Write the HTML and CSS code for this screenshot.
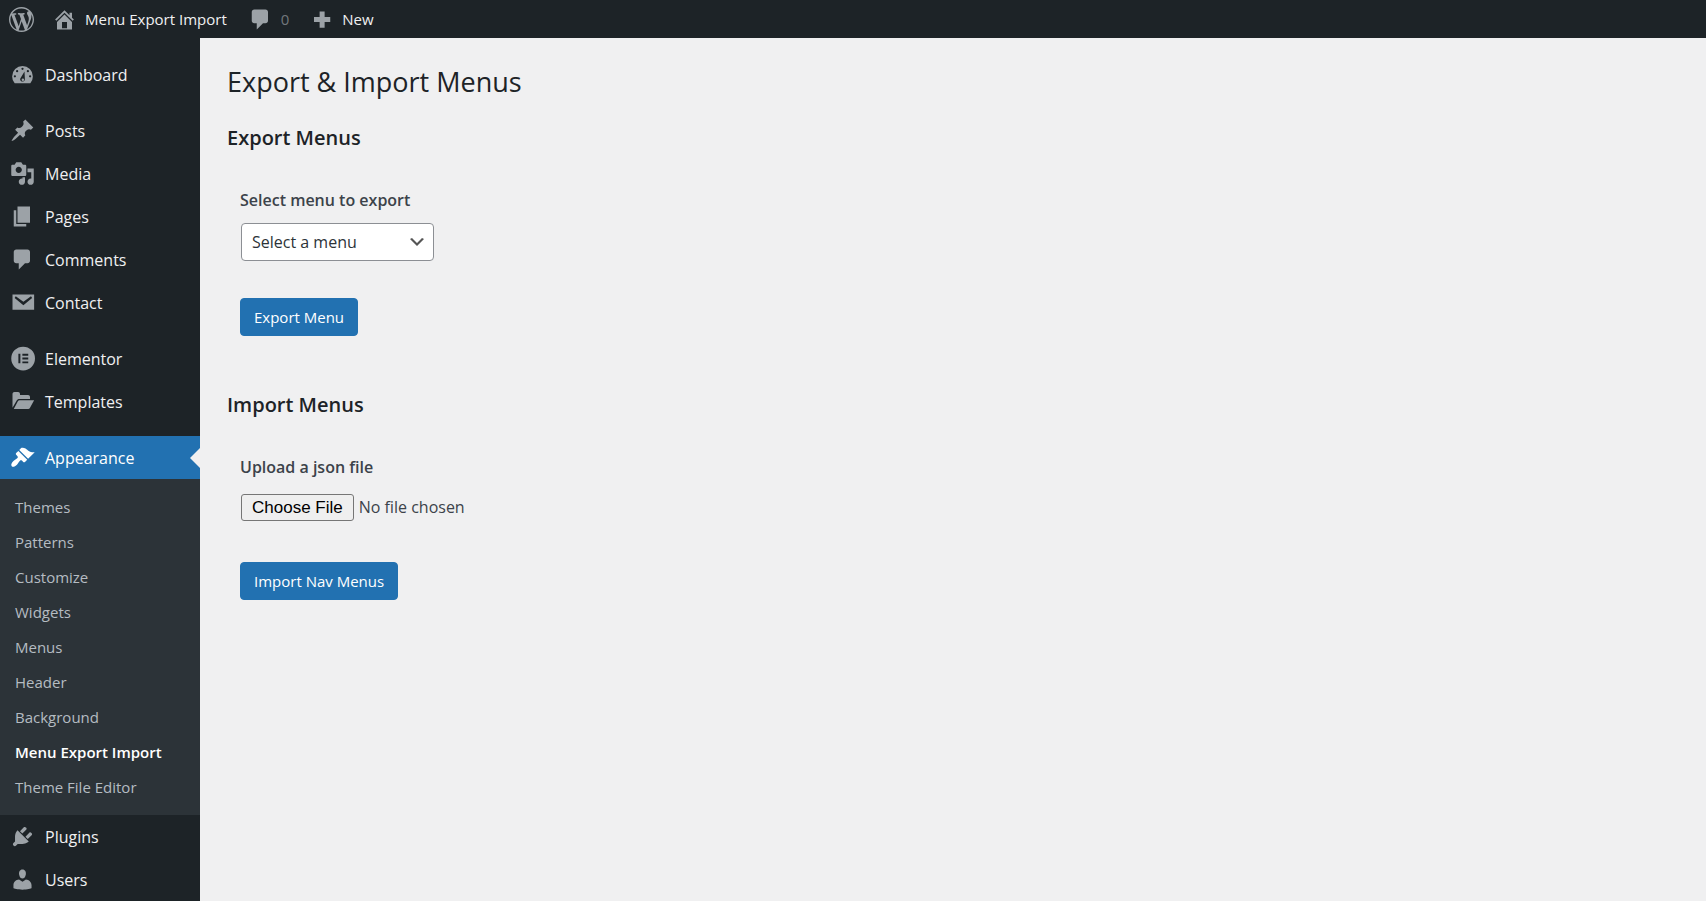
FILE: index.html
```html
<!DOCTYPE html>
<html lang="en">
<head>
  <meta charset="UTF-8" />
  <title>Export &amp; Import Menus</title>
  <meta name="viewport" content="width=device-width, initial-scale=1.0" />
  <link rel="stylesheet" href="styles.css">
</head>
<body>
  <header class="adminbar">
    <a href="#" class="bar-item bar-logo" aria-label="About WordPress">
      <svg class="icon" viewBox="0 0 20 20"><path d="M20 10c0-5.51-4.49-10-10-10C4.48 0 0 4.49 0 10c0 5.52 4.48 10 10 10 5.51 0 10-4.48 10-10zM7.78 15.37L4.37 6.22c.55-.02 1.17-.08 1.17-.08.5-.06.44-1.13-.06-1.11 0 0-1.45.11-2.37.11-.18 0-.37 0-.58-.01C4.12 2.69 6.87 1.11 10 1.11c2.33 0 4.45.87 6.05 2.34-.68-.11-1.65.39-1.65 1.58 0 .74.45 1.36.9 2.1.35.61.55 1.36.55 2.46 0 1.49-1.4 5-1.4 5l-3.03-8.37c.54-.02.82-.17.82-.17.5-.05.44-1.25-.06-1.22 0 0-1.44.12-2.38.12-.87 0-2.33-.12-2.33-.12-.5-.03-.56 1.2-.06 1.22l.92.08 1.26 3.41zM17.41 10c.24-.64.74-1.87.43-4.25.7 1.29 1.05 2.71 1.05 4.25 0 3.29-1.73 6.24-4.4 7.78.97-2.59 1.94-5.2 2.92-7.78zM6.1 18.09C3.12 16.65 1.11 13.53 1.11 10c0-1.3.23-2.48.72-3.59C3.25 10.3 4.67 14.2 6.1 18.09zm4.03-6.63l2.58 6.98c-.86.29-1.76.45-2.71.45-.79 0-1.57-.11-2.29-.33.81-2.38 1.62-4.74 2.42-7.1z"/></svg>
    </a>
    <a href="#" class="bar-item bar-site">
      <svg class="icon" viewBox="0 0 20 20"><path d="M16 8.5l1.53 1.53-1.06 1.06L10 4.6l-6.47 6.49-1.06-1.06L10 2.5l4 4v-2h2v4zm-6-2.46l6 5.99V18H4v-5.97zM12 17v-5H8v5h4z"/></svg>
      Menu Export Import
    </a>
    <a href="#" class="bar-item bar-comments">
      <svg class="icon" viewBox="0 0 20 20"><path d="M5 2h9c1.1 0 2 .9 2 2v7c0 1.1-.9 2-2 2h-2l-5 5v-5H5c-1.1 0-2-.9-2-2V4c0-1.1.9-2 2-2z"/></svg>
      <span class="count">0</span>
    </a>
    <a href="#" class="bar-item bar-new">
      <svg class="icon" viewBox="0 0 20 20"><path d="M17 8v4h-4.500v4.500h-4V12H4V8h4.500V3.500h4V8z"/></svg>
      New
    </a>
  </header>

  <div class="wrap">
    <nav class="sidebar">
      <ul class="menu">
        <li><a href="#"><svg class="icon" viewBox="0 0 20 20"><path fill-rule="evenodd" d="M3.760 17h12.480A8.300 8.300 0 0 0 18.300 11.500 8.300 8.300 0 0 0 1.700 11.500 8.300 8.300 0 0 0 3.760 17zM10 4.500a.9.9 0 1 1 0 1.800.9.9 0 0 1 0-1.800zM5.700 6.400a.9.9 0 1 1 0 1.800.9.9 0 0 1 0-1.800zM14.300 6.400a.9.9 0 1 1 0 1.800.9.9 0 0 1 0-1.800zM3.900 10.500a.9.9 0 1 1 0 1.800.9.9 0 0 1 0-1.800zM16.100 10.500a.9.9 0 1 1 0 1.800.9.9 0 0 1 0-1.800zM11.600 7.600L11.900 13.900A1.900 1.900 0 1 1 8.600 12.500zM10.300 13.100a1 1 0 1 0 0 2 1 1 0 0 0 0-2z"/></svg>Dashboard</a></li>
        <li class="gap"><a href="#"><svg class="icon" viewBox="0 0 20 20"><path d="M10.440 3.020l1.820-1.820 6.360 6.350-1.830 1.820c-1.050-.68-2.480-.57-3.410.36l-.75.75c-.92.93-1.040 2.350-.35 3.410l-1.830 1.820-2.410-2.410-2.800 2.790c-.42.42-3.380 2.710-3.800 2.290s1.860-3.390 2.280-3.810l2.790-2.790L4.100 9.360l1.830-1.820c1.050.69 2.480.57 3.400-.36l.75-.75c.93-.92 1.050-2.350.36-3.410z"/></svg>Posts</a></li>
        <li><a href="#"><svg class="icon" viewBox="0 0 20 20"><path d="M13 11V4c0-.55-.45-1-1-1h-1.670L9 1H5L3.670 3H2c-.55 0-1 .45-1 1v7c0 .55.45 1 1 1h10c.55 0 1-.45 1-1zM7 4.500c1.380 0 2.500 1.120 2.500 2.500S8.380 9.500 7 9.500 4.500 8.380 4.500 7 5.620 4.500 7 4.500zM14 6h5v10.500c0 1.380-1.120 2.500-2.500 2.500S14 17.880 14 16.500s1.120-2.500 2.500-2.500c.17 0 .34.02.5.05V9h-3V6zm-4 8.050V13h2v3.500c0 1.380-1.120 2.500-2.500 2.500S7 17.880 7 16.500 8.120 14 9.500 14c.17 0 .34.02.5.05z"/></svg>Media</a></li>
        <li><a href="#"><svg class="icon" viewBox="0 0 20 20"><path d="M6 15V2h10v13H6zm-1 1h8v2H3V5h2v11z"/></svg>Pages</a></li>
        <li><a href="#"><svg class="icon" viewBox="0 0 20 20"><path d="M5 2h9c1.100 0 2 .9 2 2v7c0 1.100-.9 2-2 2h-2l-5 5v-5H5c-1.100 0-2-.9-2-2V4c0-1.100.9-2 2-2z"/></svg>Comments</a></li>
        <li><a href="#"><svg class="icon" viewBox="0 0 20 20"><path fill-rule="evenodd" d="M2 3.500h17.300v12.300H2zM4.600 5L3.700 6.300l7 5.900 7-5.900-.9-1.300-6.100 4.300z"/></svg>Contact</a></li>
        <li class="gap"><a href="#"><svg class="icon" viewBox="0 0 20 20"><path fill-rule="evenodd" d="M10.500.5a9.500 9.500 0 1 1 0 19 9.500 9.500 0 0 1 0-19zM6.700 6.200v7.600h1.600V6.200zM9.900 6.200v1.500h4.700V6.200zM9.900 9.250v1.500h4.700v-1.500zM9.900 12.300v1.500h4.700v-1.500z"/></svg>Elementor</a></li>
        <li><a href="#"><svg class="icon" viewBox="0 0 20 20"><path d="M2 15V4C2 3.100 2.700 2.400 3.500 2.400h3C7.300 2.400 8 3.100 8 4v.8h6.500c.8 0 1.500.7 1.500 1.500V8H7.500c-.8 0-1.500.3-2 1zM3 16l3.300-6.200c.3-.5.700-.8 1.300-.8H19.300l-3.400 6.200c-.3.500-.7.8-1.300.8z"/></svg>Templates</a></li>
        <li class="gap current">
          <a href="#"><svg class="icon" viewBox="0 0 20 20"><path d="M14.480 11.060L7.410 3.990l1.500-1.500c.5-.56 2.300-.47 3.510.32 1.210.8 1.430 1.280 2.910 2.100 1.180.64 2.450 1.260 4.450.85zm-.71.71L6.700 4.700 4.930 6.470c-.39.39-.39 1.020 0 1.410l1.060 1.060c.39.39.39 1.030 0 1.420-.6.6-1.430 1.110-2.210 1.690-.35.26-.7.53-1.010.84C1.430 14.230.4 16.080 1.400 17.070c.99 1 2.840-.03 4.180-1.360.31-.31.58-.66.85-1.020.57-.78 1.080-1.610 1.690-2.210.39-.39 1.020-.39 1.410 0l1.060 1.060c.39.39 1.020.39 1.410 0z"/></svg>Appearance</a>
          <ul class="submenu">
            <li><a href="#">Themes</a></li>
            <li><a href="#">Patterns</a></li>
            <li><a href="#">Customize</a></li>
            <li><a href="#">Widgets</a></li>
            <li><a href="#">Menus</a></li>
            <li><a href="#">Header</a></li>
            <li><a href="#">Background</a></li>
            <li><a href="#" class="active">Menu Export Import</a></li>
            <li><a href="#">Theme File Editor</a></li>
          </ul>
        </li>
        <li><a href="#"><svg class="icon" viewBox="0 0 20 20"><path d="M13.110 4.360L9.870 7.600 8 5.730l3.240-3.240c.35-.34 1.050-.2 1.560.32.52.51.66 1.210.31 1.550zm-8 1.770l.91-1.120 9.010 9.010-1.190.84c-.71.71-2.630 1.160-3.820 1.160H6.140L4.900 17.260c-.59.59-1.540.59-2.120 0-.59-.58-.59-1.530 0-2.120l1.240-1.240v-3.880c0-1.130.4-3.190 1.090-3.890zm7.260 3.970l3.240-3.240c.34-.35 1.040-.21 1.550.31.52.51.66 1.210.31 1.550l-3.240 3.250z"/></svg>Plugins</a></li>
        <li><a href="#"><svg class="icon" viewBox="0 0 20 20"><path d="M10 9.250c-2.270 0-2.730-3.440-2.730-3.440C7 4.020 7.820 2 9.970 2c2.160 0 2.980 2.020 2.710 3.810 0 0-.41 3.440-2.680 3.440zm0 2.570L12.720 10c2.390 0 4.520 2.330 4.520 4.530v2.490s-3.650 1.130-7.240 1.130c-3.650 0-7.240-1.130-7.240-1.130v-2.490c0-2.250 1.940-4.480 4.470-4.480z"/></svg>Users</a></li>
      </ul>
    </nav>

    <main class="content">
      <h1>Export &amp; Import Menus</h1>

      <h2>Export Menus</h2>
      <form class="panel">
        <label for="menu">Select menu to export</label>
        <div class="select">
          <select id="menu">
            <option>Select a menu</option>
          </select>
          <svg class="chevron" viewBox="0 0 20 20"><path d="M5 6l5 5 5-5 2 1-7 7-7-7 2-1z"/></svg>
        </div>
        <button type="button">Export Menu</button>
      </form>

      <h2>Import Menus</h2>
      <form class="panel">
        <label for="file">Upload a json file</label>
        <input type="file" id="file">
        <button type="button">Import Nav Menus</button>
      </form>
    </main>
  </div>
</body>
</html>
```
FILE: styles.css
```css
* {
  box-sizing: border-box;
}

body {
  margin: 0;
  min-height: 100vh;
  display: flex;
  flex-direction: column;
  background: #f0f0f1;
  color: #3c434a;
  font-family: "Open Sans", "Noto Sans", sans-serif;
  font-size: 16px;
}

a {
  color: inherit;
  text-decoration: none;
}

ul {
  list-style: none;
  margin: 0;
  padding: 0;
}

.icon {
  width: 25px;
  height: 25px;
  flex: none;
  fill: #9ca2a7;
}

/* top bar */
.adminbar {
  display: flex;
  height: 38px;
  padding-left: 9px;
  background: #1d2327;
  color: #f0f0f1;
  font-size: 15px;
}

.bar-item {
  display: flex;
  align-items: center;
  gap: 8px;
}

.bar-site {
  margin-left: 18px;
}

.bar-comments {
  margin-left: 21px;
}

.bar-new {
  margin-left: 20px;
}

.count {
  color: #72777c;
}

.wrap {
  display: flex;
  flex: 1;
}

/* side menu */
.sidebar {
  width: 200px;
  flex: none;
  padding-top: 15px;
  background: #1d2327;
  color: #f0f0f1;
}

.menu a {
  position: relative;
  display: flex;
  align-items: center;
  gap: 10px;
  height: 43px;
  padding-left: 10px;
}

.gap {
  margin-top: 13px;
}

.current > a {
  background: #2271b1;
  color: #fff;
}

.current > a .icon {
  fill: #fff;
}

.current > a::after {
  content: "";
  position: absolute;
  right: 0;
  top: 12px;
  border: 10px solid transparent;
  border-left: 0;
  border-right-color: #f0f0f1;
}

.submenu {
  padding: 10px 0 11px;
  background: #2c3338;
  color: #b5bcc2;
  font-size: 15px;
}

.submenu a {
  height: 35px;
  padding-left: 15px;
}

.submenu .active {
  color: #fff;
  font-weight: 600;
}

/* page */
.content {
  flex: 1;
  padding: 24px 27px;
}

h1 {
  margin: 0;
  font-size: 27px;
  font-weight: 400;
  line-height: 40px;
  color: #1d2327;
}

h2 {
  margin: 22px 0 0;
  font-size: 20px;
  font-weight: 600;
  line-height: 28px;
  color: #1d2327;
}

.panel {
  display: flex;
  flex-direction: column;
  align-items: flex-start;
  padding: 36px 13px 33px;
}

.panel label {
  font-weight: 600;
  line-height: 24px;
}

.select {
  position: relative;
  margin: 11px 0 37px 1px;
}

select {
  appearance: none;
  width: 193px;
  height: 38px;
  padding: 0 30px 0 10px;
  border: 1px solid #8c8f94;
  border-radius: 4px;
  background: #fff;
  color: #2c3338;
  font: inherit;
}

.chevron {
  position: absolute;
  right: 7px;
  top: 9px;
  width: 20px;
  height: 20px;
  fill: #555;
  pointer-events: none;
}

input[type="file"] {
  margin: 15px 0 41px 1px;
  font: inherit;
}

input::file-selector-button {
  height: 27px;
  margin-right: 5px;
  padding: 0 10px;
  border: 1px solid #767676;
  border-radius: 3px;
  background: #efefef;
  color: #000;
  font: 17px "Liberation Sans", Arial, sans-serif;
}

button {
  height: 38px;
  padding: 0 13px;
  border: 1px solid #2271b1;
  border-radius: 4px;
  background: #2271b1;
  color: #fff;
  font: inherit;
  font-size: 15px;
}
```
